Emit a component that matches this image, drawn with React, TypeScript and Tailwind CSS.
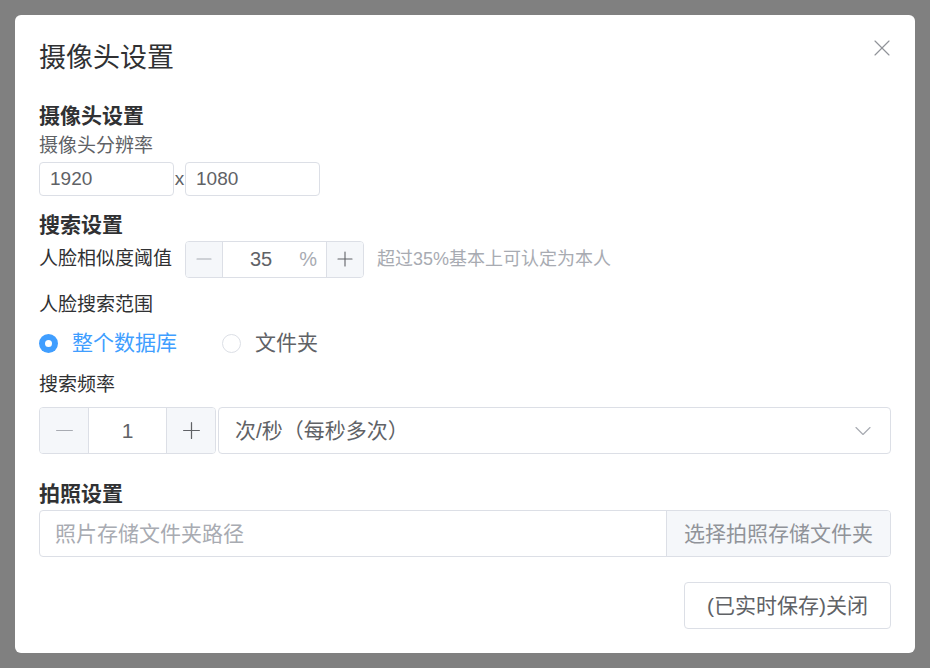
import { ChevronDown, Minus, Plus, X } from 'lucide-react'

const font = "font-['Liberation_Sans','Noto_Sans_CJK_SC',sans-serif]"

function NumberBox({
  value,
  suffix,
  h,
  sideW,
  midW,
  icon,
  textSize,
}: {
  value: string
  suffix?: string
  h: string
  sideW: string
  midW: string
  icon: number
  textSize: string
}) {
  return (
    <div className={`flex ${h} rounded-[4px] border border-[#dcdfe6] bg-white overflow-hidden`}>
      <div className={`${sideW} flex items-center justify-center bg-[#f5f7fa] border-r border-[#dcdfe6] text-[#a8abb2]`}>
        <Minus size={icon} strokeWidth={1.1} />
      </div>
      <div className={`${midW} relative flex items-center justify-center ${textSize} text-[#606266] ${suffix ? 'pr-[27px]' : ''}`}>
        {value}
        {suffix && <span className="absolute right-[9px] text-[#a8abb2]">{suffix}</span>}
      </div>
      <div className={`${sideW} flex items-center justify-center bg-[#f5f7fa] border-l border-[#dcdfe6] text-[#606266]`}>
        <Plus size={icon} strokeWidth={1.1} />
      </div>
    </div>
  )
}

export default function App() {
  return (
    <div className={`w-[930px] h-[668px] bg-[#808080] p-[15px] ${font}`}>
      <div className="w-[900px] h-[638px] bg-white rounded-[6px] px-[24px] pt-[25px]">
        {/* header */}
        <div className="flex items-center h-[36px]">
          <span className="text-[27px] leading-[36px] text-[#303133]">摄像头设置</span>
          <X size={28} strokeWidth={1} className="ml-auto -mr-[5px] -mt-[20px] text-[#909399]" />
        </div>

        {/* camera */}
        <div className="mt-[26px] h-[28px] leading-[28px] text-[21px] font-bold text-[#303133]">摄像头设置</div>
        <div className="mt-[4px] h-[24px] leading-[24px] text-[19px] text-[#606266]">摄像头分辨率</div>
        <div className="mt-[4px] flex items-center h-[34px]">
          <div className="w-[135px] h-[34px] rounded-[4px] border border-[#dcdfe6] px-[10px] flex items-center text-[19px] text-[#606266]">1920</div>
          <span className="w-[11px] text-center text-[19px] text-[#606266]">x</span>
          <div className="w-[135px] h-[34px] rounded-[4px] border border-[#dcdfe6] px-[10px] flex items-center text-[19px] text-[#606266]">1080</div>
        </div>

        {/* search */}
        <div className="mt-[15px] h-[28px] leading-[28px] text-[21px] font-bold text-[#303133]">搜索设置</div>
        <div className="flex items-center h-[40px]">
          <span className="w-[146px] text-[19px] text-[#303133]">人脸相似度阈值</span>
          <NumberBox value="35" suffix="%" h="h-[37px]" sideW="w-[37px]" midW="w-[103px]" icon={24} textSize="text-[20px]" />
          <span className="ml-[13px] text-[18px] text-[#a8abb2]">超过35%基本上可认定为本人</span>
        </div>
        <div className="mt-[14px] h-[24px] leading-[24px] text-[19px] text-[#303133]">人脸搜索范围</div>
        <div className="mt-[10px] flex items-center h-[32px]">
          <div className="w-[19px] h-[19px] rounded-full bg-[#409eff] flex items-center justify-center">
            <div className="w-[7px] h-[7px] rounded-full bg-white" />
          </div>
          <span className="ml-[14px] text-[21px] text-[#409eff]">整个数据库</span>
          <div className="ml-[45px] w-[19px] h-[19px] rounded-full border border-[#dcdfe6]" />
          <span className="ml-[14px] text-[21px] text-[#606266]">文件夹</span>
        </div>
        <div className="mt-[14px] h-[24px] leading-[24px] text-[19px] text-[#303133]">搜索频率</div>
        <div className="mt-[10px] flex gap-[2px] h-[47px]">
          <NumberBox value="1" h="h-[47px]" sideW="w-[49px]" midW="w-[77px]" icon={27} textSize="text-[21px]" />
          <div className="flex-1 h-[47px] rounded-[4px] border border-[#dcdfe6] flex items-center pl-[16px] pr-[13px] text-[21px] text-[#606266]">
            <span>次/秒（每秒多次）</span>
            <ChevronDown size={28} strokeWidth={1} className="ml-auto text-[#a8abb2]" />
          </div>
        </div>

        {/* photo */}
        <div className="mt-[26px] h-[28px] leading-[28px] text-[21px] font-bold text-[#303133]">拍照设置</div>
        <div className="mt-[2px] flex h-[47px] rounded-[4px] border border-[#dcdfe6] overflow-hidden">
          <div className="flex-1 flex items-center pl-[15px] text-[21px] text-[#a8abb2]">照片存储文件夹路径</div>
          <div className="w-[224px] flex items-center justify-center bg-[#f5f7fa] border-l border-[#dcdfe6] text-[21px] text-[#909399]">选择拍照存储文件夹</div>
        </div>

        <div className="mt-[25px] flex justify-end">
          <div className="w-[207px] h-[47px] rounded-[4px] border border-[#dcdfe6] flex items-center justify-center text-[21px] text-[#606266]">(已实时保存)关闭</div>
        </div>
      </div>
    </div>
  )
}
